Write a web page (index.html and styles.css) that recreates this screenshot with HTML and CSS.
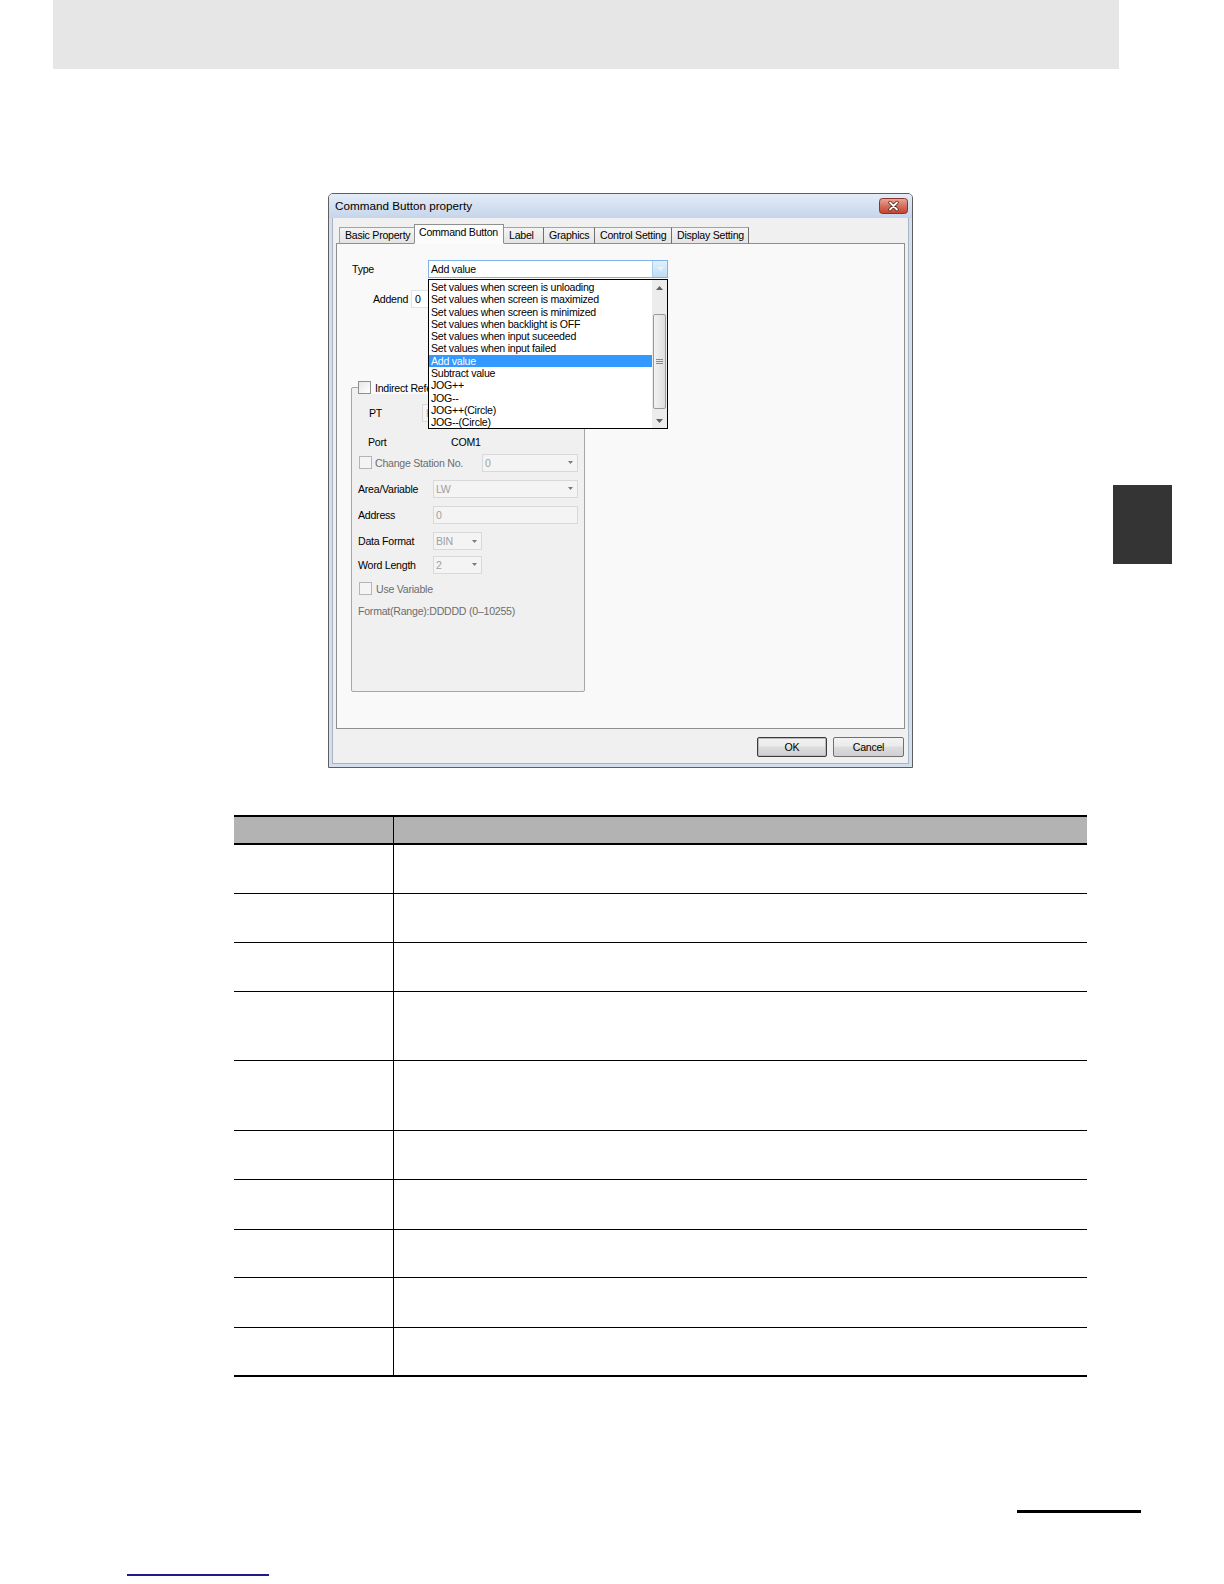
FILE: index.html
```html
<!DOCTYPE html>
<html>
<head>
<meta charset="utf-8">
<title>Command Button property</title>
<link rel="stylesheet" href="styles.css">
</head>
<body>
<div class="page">
  <div class="top-band"></div>
  <div class="thumb-tab"></div>

  <div class="dialog">
    <div class="titlebar">
      <span class="title">Command Button property</span>
      <div class="close-btn">
        <svg width="29" height="16" viewBox="0 0 29 16">
          <defs>
            <linearGradient id="cg" x1="0" y1="0" x2="0" y2="1">
              <stop offset="0" stop-color="#e9a99f"/>
              <stop offset="0.5" stop-color="#d4705f"/>
              <stop offset="1" stop-color="#c2402d"/>
            </linearGradient>
          </defs>
          <rect x="0.5" y="0.5" width="28" height="15" rx="3" fill="url(#cg)" stroke="#8a3326"/>
          <path d="M11 4.5 L18 11.5 M18 4.5 L11 11.5" stroke="#5a1d14" stroke-width="3.4" stroke-linecap="round"/>
          <path d="M11 4.5 L18 11.5 M18 4.5 L11 11.5" stroke="#ffffff" stroke-width="1.8" stroke-linecap="round"/>
        </svg>
      </div>
    </div>

    <div class="client">
      <div class="tabs">
        <div class="tab w-basic">Basic Property</div>
        <div class="tab active w-cmd">Command Button</div>
        <div class="tab w-label">Label</div>
        <div class="tab w-graph">Graphics</div>
        <div class="tab w-ctrl">Control Setting</div>
        <div class="tab w-disp">Display Setting</div>
      </div>

      <div class="panel">
        <div class="row type-row">
          <span class="lbl lbl-type">Type</span>
          <div class="combo combo-focus w-type">
            <span class="combo-text">Add value</span>
            <span class="arrow-btn">
              <svg width="7" height="4" viewBox="0 0 7 4"><path d="M0 0 L7 0 L3.5 4 Z" fill="#e8f3fc"/></svg>
            </span>
          </div>
        </div>

        <div class="row addend-row">
          <span class="lbl lbl-addend">Addend</span>
          <div class="textbox w-addend">0</div>
        </div>

        <fieldset class="group">
          <legend class="group-legend"><span class="check"></span><span class="legend-text">Indirect Reference</span></legend>

          <div class="row g-pt">
            <span class="lbl lbl-pt">PT</span>
            <div class="combo w-pt"><span class="combo-text">HMI</span><span class="dd"><svg width="5" height="3" viewBox="0 0 5 3"><path d="M0 0 L5 0 L2.5 3 Z" fill="#7a7a7a"/></svg></span></div>
          </div>

          <div class="row g-port">
            <span class="lbl lbl-port">Port</span>
            <span class="port-val">COM1</span>
          </div>

          <div class="row g-station">
            <span class="check check-dis"></span>
            <span class="lbl dis lbl-station">Change Station No.</span>
            <div class="combo w-station"><span class="combo-text">0</span><span class="dd"><svg width="5" height="3" viewBox="0 0 5 3"><path d="M0 0 L5 0 L2.5 3 Z" fill="#7a7a7a"/></svg></span></div>
          </div>

          <div class="row g-area">
            <span class="lbl lbl-field">Area/Variable</span>
            <div class="combo w-wide"><span class="combo-text">LW</span><span class="dd"><svg width="5" height="3" viewBox="0 0 5 3"><path d="M0 0 L5 0 L2.5 3 Z" fill="#7a7a7a"/></svg></span></div>
          </div>

          <div class="row g-addr">
            <span class="lbl lbl-field">Address</span>
            <div class="combo w-wide"><span class="combo-text">0</span></div>
          </div>

          <div class="row g-fmt">
            <span class="lbl lbl-field">Data Format</span>
            <div class="combo w-small"><span class="combo-text">BIN</span><span class="dd"><svg width="5" height="3" viewBox="0 0 5 3"><path d="M0 0 L5 0 L2.5 3 Z" fill="#7a7a7a"/></svg></span></div>
          </div>

          <div class="row g-len">
            <span class="lbl lbl-field">Word Length</span>
            <div class="combo w-small"><span class="combo-text">2</span><span class="dd"><svg width="5" height="3" viewBox="0 0 5 3"><path d="M0 0 L5 0 L2.5 3 Z" fill="#7a7a7a"/></svg></span></div>
          </div>

          <div class="row g-var">
            <span class="check check-dis"></span>
            <span class="lbl dis lbl-var">Use Variable</span>
          </div>

          <div class="row g-range">
            <span class="lbl dis">Format(Range):DDDDD (0–10255)</span>
          </div>
        </fieldset>

        <div class="droplist">
          <div class="items">
            <div class="item">Set values when screen is unloading</div>
            <div class="item">Set values when screen is maximized</div>
            <div class="item">Set values when screen is minimized</div>
            <div class="item">Set values when backlight is OFF</div>
            <div class="item">Set values when input suceeded</div>
            <div class="item">Set values when input failed</div>
            <div class="item selected">Add value</div>
            <div class="item">Subtract value</div>
            <div class="item">JOG++</div>
            <div class="item">JOG--</div>
            <div class="item">JOG++(Circle)</div>
            <div class="item">JOG--(Circle)</div>
          </div>
          <div class="scrollbar">
            <div class="sb-arrow">
              <svg width="7" height="4" viewBox="0 0 7 4"><path d="M0 4 L7 4 L3.5 0 Z" fill="#606060"/></svg>
            </div>
            <div class="sb-gap-top"></div>
            <div class="sb-thumb">
              <svg width="7" height="6" viewBox="0 0 7 6"><path d="M0 0.5 H7 M0 2.5 H7 M0 4.5 H7" stroke="#8a8a8a" stroke-width="1"/></svg>
            </div>
            <div class="sb-gap-bottom"></div>
            <div class="sb-arrow">
              <svg width="7" height="4" viewBox="0 0 7 4"><path d="M0 0 L7 0 L3.5 4 Z" fill="#606060"/></svg>
            </div>
          </div>
        </div>
      </div>

      <div class="buttons">
        <div class="btn btn-default">OK</div>
        <div class="btn btn-cancel">Cancel</div>
      </div>
    </div>
  </div>

  <table class="spec">
    <thead>
      <tr><th class="col1"></th><th class="col2"></th></tr>
    </thead>
    <tbody>
      <tr class="hs"><td class="col1"></td><td></td></tr>
      <tr class="hm"><td class="col1"></td><td></td></tr>
      <tr class="hs"><td class="col1"></td><td></td></tr>
      <tr class="hl"><td class="col1"></td><td></td></tr>
      <tr class="hl2"><td class="col1"></td><td></td></tr>
      <tr class="hs"><td class="col1"></td><td></td></tr>
      <tr class="hs"><td class="col1"></td><td></td></tr>
      <tr class="hm"><td class="col1"></td><td></td></tr>
      <tr class="hs"><td class="col1"></td><td></td></tr>
      <tr class="hm last"><td class="col1"></td><td></td></tr>
    </tbody>
  </table>

  <div class="page-rule"></div>
  <div class="link-rule"></div>
</div>
</body>
</html>
```

FILE: styles.css
```css
html, body {
  margin: 0;
  padding: 0;
  background: #ffffff;
}

.page {
  position: relative;
  width: 1224px;
  height: 1584px;
  overflow: hidden;
  font-family: "Liberation Sans", Arial, sans-serif;
}

.top-band {
  margin-left: 53px;
  width: 1066px;
  height: 69px;
  background: #e6e6e6;
}

.thumb-tab {
  position: absolute;
  left: 1113px;
  top: 485px;
  width: 59px;
  height: 79px;
  background: #343434;
}

/* ---------- dialog ---------- */
.dialog {
  margin-top: 124px;
  margin-left: 328px;
  width: 585px;
  height: 575px;
  box-sizing: border-box;
  border: 1px solid #5e5e5e;
  border-radius: 5px 5px 0 0;
  background: #d4dfed;
  display: flex;
  flex-direction: column;
  font-size: 10.6px;
  letter-spacing: -0.25px;
  color: #000;
}

.titlebar {
  height: 24px;
  flex: none;
  display: flex;
  justify-content: space-between;
  align-items: flex-start;
  padding: 0 4px 0 6px;
  background: linear-gradient(#e4ecf7, #c5d5ea);
  border-radius: 4px 4px 0 0;
}

.title {
  font-size: 11.7px;
  letter-spacing: 0;
  line-height: 24px;
  color: #000;
}

.close-btn {
  margin-top: 4px;
  width: 29px;
  height: 16px;
}

.client {
  flex: 1;
  margin: 0 3px 3px 3px;
  border: 1px solid #a9b4c2;
  border-top: none;
  background: #f0f0f0;
  padding: 6px 3px 0 3px;
  display: flex;
  flex-direction: column;
}

.tabs {
  display: flex;
  align-items: flex-end;
  height: 20px;
  padding-left: 3px;
  margin-bottom: -1px;
  position: relative;
  z-index: 1;
}

.tab {
  box-sizing: border-box;
  height: 17px;
  border: 1px solid #a3a3a3;
  border-bottom: 1px solid #8e8f8f;
  border-right: none;
  background: linear-gradient(#f4f4f4, #e4e4e4);
  padding-left: 5px;
  line-height: 15px;
  white-space: nowrap;
}

.tab + .tab { border-left: 1px solid #6f6f6f; }
.tab:last-child { border-right: 1px solid #6f6f6f; }

.tab.active {
  height: 20px;
  background: #fcfcfc;
  border: 1px solid #8e8f8f;
  border-bottom-color: #fcfcfc;
  line-height: 15px;
  padding-left: 4px;
}

.tab.active + .tab { border-left: none; }

.w-basic { width: 75px; }
.w-cmd { width: 90px; }
.w-label { width: 39px; }
.w-graph { width: 51px; }
.w-ctrl { width: 77px; }
.w-disp { width: 78px; }

.panel {
  position: relative;
  box-sizing: border-box;
  height: 486px;
  border: 1px solid #8e8f8f;
  background: #f9f9f9;
  padding: 16px 0 0 15px;
}

.row {
  display: flex;
  align-items: center;
  height: 18px;
  white-space: nowrap;
}

.lbl { flex: none; }
.lbl-type { width: 76px; }
.addend-row { margin-top: 12px; }
.lbl-addend { margin-left: 21px; width: 38px; }

.combo {
  box-sizing: border-box;
  height: 18px;
  border: 1px solid #d9d9d9;
  background: #f4f4f4;
  color: #a0a0a0;
  display: flex;
  align-items: center;
  justify-content: space-between;
  padding-left: 2px;
  flex: none;
}

.combo .dd {
  width: 14px;
  height: 16px;
  display: flex;
  align-items: center;
  justify-content: center;
}

.combo-focus {
  border-color: #7eb4ea;
  background: #ffffff;
  color: #000;
}

.arrow-btn {
  width: 14px;
  height: 16px;
  background: linear-gradient(#e3f0fb, #bcdcf6);
  border-left: 1px solid #a8cdf0;
  display: flex;
  align-items: center;
  justify-content: center;
}

.w-type { width: 240px; }

.textbox {
  box-sizing: border-box;
  height: 18px;
  border: 1px solid #e3e3e3;
  background: #ffffff;
  padding-left: 3px;
  line-height: 16px;
  flex: none;
}

.w-addend { width: 90px; }

/* ---------- group box ---------- */
.group {
  margin: 73px 0 0 -1px;
  width: 234px;
  height: 311px;
  box-sizing: border-box;
  border: 1px solid #a6a6a6;
  border-radius: 2px;
  padding: 10px 6px 0 6px;
  min-width: 0;
  background: #f0f0f0;
}

.group-legend {
  display: flex;
  align-items: center;
  height: 13px;
  padding: 0 2px 0 0;
  margin-left: 0;
  background: #f9f9f9;
}

.legend-text { margin-left: 4px; }

.check {
  display: inline-block;
  box-sizing: border-box;
  width: 13px;
  height: 13px;
  border: 1px solid #8e8f8f;
  background: linear-gradient(135deg, #e6e6e6, #ffffff);
  flex: none;
}

.check-dis {
  border-color: #b5b5b5;
  background: #f4f4f4;
  margin-left: 1px;
}

.dis { color: #6d6d6d; }

.g-pt { margin-top: 0; }
.lbl-pt { margin-left: 11px; width: 53px; }
.w-pt { width: 150px; padding-left: 3px; }

.g-port { margin-top: 10.8px; }
.lbl-port { margin-left: 10px; width: 83px; }

.g-station { margin-top: 2.8px; }
.lbl-station { margin-left: 3px; width: 107px; }
.w-station { width: 96px; }

.g-area { margin-top: 8.3px; }
.g-addr { margin-top: 8.3px; }
.g-fmt { margin-top: 8.2px; }
.g-len { margin-top: 5.2px; }
.g-var { margin-top: 6.3px; }
.g-range { margin-top: 4.2px; }

.lbl-field { width: 75px; }
.w-wide { width: 145px; }
.w-small { width: 49px; }
.lbl-var { margin-left: 4px; }

/* ---------- drop-down list ---------- */
.droplist {
  position: absolute;
  left: 91px;
  top: 35px;
  width: 240px;
  height: 150px;
  box-sizing: border-box;
  border: 1px solid #000;
  background: #ffffff;
  display: flex;
  z-index: 2;
}

.items {
  flex: 1;
  padding-top: 1px;
}

.item {
  height: 12.3px;
  line-height: 12px;
  padding-left: 2px;
  white-space: nowrap;
}

.item.selected {
  background: #3399ff;
  color: #ffffff;
}

.scrollbar {
  width: 15px;
  flex: none;
  display: flex;
  flex-direction: column;
  background: #ececec;
}

.sb-arrow {
  height: 15px;
  display: flex;
  align-items: center;
  justify-content: center;
}

.sb-gap-top { height: 19px; }

.sb-thumb {
  box-sizing: border-box;
  height: 95px;
  margin: 0 1px;
  border: 1px solid #9a9a9a;
  border-radius: 2px;
  background: linear-gradient(90deg, #f2f2f2, #dedede);
  display: flex;
  align-items: center;
  justify-content: center;
}

.sb-gap-bottom { flex: 1; }

/* ---------- buttons ---------- */
.buttons {
  display: flex;
  justify-content: flex-end;
  gap: 6px;
  margin-top: 8px;
  padding-right: 1px;
}

.btn {
  box-sizing: border-box;
  height: 20px;
  border: 1px solid #707070;
  border-radius: 2px;
  background: linear-gradient(#f2f2f2 0%, #ebebeb 45%, #dddddd 50%, #cfcfcf 100%);
  text-align: center;
  line-height: 18px;
  font-size: 10.6px;
}

.btn-default {
  width: 70px;
  border: 1px solid #3c3c3c;
  box-shadow: inset 0 0 0 1px #b9b9b9;
}

.btn-cancel { width: 71px; }

/* ---------- table ---------- */
.spec {
  margin-top: 47px;
  margin-left: 234px;
  width: 853px;
  border-collapse: collapse;
  table-layout: fixed;
}

.spec th {
  height: 26.3px;
  padding: 0;
  background: #b3b3b3;
  border-top: 2px solid #000;
  border-bottom: 2px solid #000;
}

.spec .col1 {
  width: 159px;
  border-right: 1px solid #000;
}

.spec td {
  padding: 0;
  border-bottom: 1px solid #000;
}

.spec tr.last td { border-bottom: 2px solid #000; }

.hs { height: 49.5px; }
.hm { height: 48.5px; }
.hl { height: 68.7px; }
.hl2 { height: 69.7px; }

.page-rule {
  margin-top: 133px;
  margin-left: 1017px;
  width: 124px;
  height: 3px;
  background: #000;
}

.link-rule {
  margin-top: 61px;
  margin-left: 127px;
  width: 142px;
  height: 2px;
  background: #1c1c8e;
}
```
